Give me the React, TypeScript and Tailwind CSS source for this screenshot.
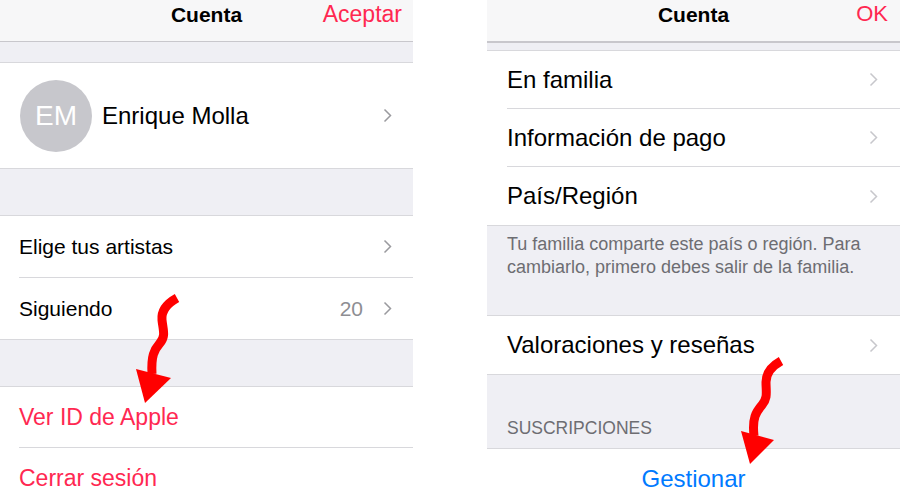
import React from 'react';

const font = { fontFamily: '"Liberation Sans", Arial, sans-serif' };

function Chevron({ light = false }: { light?: boolean }) {
  return (
    <svg width="9" height="15" viewBox="0 0 9 15" className={light ? 'text-[#c7c7cc]' : 'text-[#9a9a9f]'}>
      <polyline points="1.5,1.5 7.5,7.5 1.5,13.5" fill="none" stroke="currentColor" strokeWidth="1.5" />
    </svg>
  );
}

function LeftPanel() {
  return (
    <div className="w-[413px] h-[500px] overflow-hidden bg-[#efeff4] flex flex-col shrink-0">
      {/* nav */}
      <div className="h-[42px] shrink-0 bg-[#f7f7f8] border-b border-[#c8c7cc] relative flex items-center justify-center">
        <span className="text-[21px] font-bold text-black leading-none -mt-[12px]">Cuenta</span>
        <span className="absolute right-[11px] top-[3px] text-[23px] text-[#ff2851] leading-none">Aceptar</span>
      </div>
      <div className="h-[21px] shrink-0 border-b border-[#d8d8dc]" />

      {/* profile */}
      <div className="h-[106px] shrink-0 bg-white border-b border-[#d8d8dc] flex items-center pl-[20px] pr-[21px]">
        <div className="w-[72px] h-[72px] rounded-full bg-[#c7c7cc] flex items-center justify-center text-white text-[28px] leading-none">
          EM
        </div>
        <span className="ml-[10px] text-[24px] text-black flex-1">Enrique Molla</span>
        <Chevron />
      </div>

      <div className="h-[47px] shrink-0 border-b border-[#d8d8dc]" />

      <div className="bg-white shrink-0 border-b border-[#d8d8dc]">
        <div className="h-[62px] ml-[19px] pr-[21px] border-b border-[#d8d8dc] flex items-center">
          <span className="flex-1 text-[21px] text-black">Elige tus artistas</span>
          <Chevron />
        </div>
        <div className="h-[61px] ml-[19px] pr-[21px] flex items-center">
          <span className="flex-1 text-[21px] text-black">Siguiendo</span>
          <span className="text-[21px] text-[#8e8e93] mr-[20px]">20</span>
          <Chevron />
        </div>
      </div>

      <div className="h-[47px] shrink-0 border-b border-[#d8d8dc]" />

      <div className="bg-white flex-1">
        <div className="h-[61px] ml-[19px] border-b border-[#d8d8dc] flex items-center">
          <span className="text-[23px] text-[#ff2851]">Ver ID de Apple</span>
        </div>
        <div className="h-[61px] ml-[19px] flex items-center">
          <span className="text-[23px] text-[#ff2851]">Cerrar sesión</span>
        </div>
      </div>
    </div>
  );
}

function Row({ label, last = false }: { label: string; last?: boolean }) {
  return (
    <div className={`h-[58px] ml-[20px] pr-[22px] flex items-center ${last ? '' : 'border-b border-[#d8d8dc]'}`}>
      <span className="flex-1 text-[24px] text-black">{label}</span>
      <Chevron light />
    </div>
  );
}

function RightPanel() {
  return (
    <div className="flex-1 h-[500px] overflow-hidden bg-[#efeff4] flex flex-col">
      <div className="h-[43px] shrink-0 bg-[#f7f7f8] border-b-2 border-[#c8c7cc] relative flex items-center justify-center">
        <span className="text-[21px] font-bold text-black leading-none -mt-[12px]">Cuenta</span>
        <span className="absolute right-[12px] top-[3px] text-[22px] text-[#ff2851] leading-none">OK</span>
      </div>
      <div className="h-[8px] shrink-0 border-b border-[#d8d8dc]" />

      <div className="bg-white shrink-0 border-b border-[#d8d8dc]">
        <Row label="En familia" />
        <Row label="Información de pago" />
        <Row label="País/Región" last />
      </div>

      <div className="h-[90px] shrink-0 border-b border-[#d8d8dc] pl-[20px] pt-[7px] text-[18px] leading-[23px] text-[#6d6d72]">
        Tu familia comparte este país o región. Para
        <br />
        cambiarlo, primero debes salir de la familia.
      </div>

      <div className="bg-white shrink-0 border-b border-[#d8d8dc]">
        <Row label="Valoraciones y reseñas" last />
      </div>

      <div className="h-[74px] shrink-0 border-b border-[#d8d8dc] pl-[20px] flex items-end pb-[11px]">
        <span className="text-[17.5px] text-[#6d6d72] leading-none">SUSCRIPCIONES</span>
      </div>

      <div className="bg-white flex-1">
        <div className="h-[59px] flex items-center justify-center">
          <span className="text-[24px] text-[#007aff]">Gestionar</span>
        </div>
      </div>
    </div>
  );
}

export default function App() {
  return (
    <div className="relative w-[900px] h-[500px] overflow-hidden bg-white flex" style={font}>
      <LeftPanel />
      <div className="w-[74px] shrink-0 bg-white" />
      <RightPanel />

      {/* red hand-drawn arrows */}
      <svg className="absolute inset-0 pointer-events-none" width="900" height="500" viewBox="0 0 900 500">
        <path
          d="M177 298 C 168 303, 161 310, 162 320 C 163 330, 166 336, 160 343 C 154 350, 151 356, 152 374"
          fill="none"
          stroke="#ff0000"
          strokeWidth="9"
        />
        <polygon points="136,369 171,378 145,403" fill="#ff0000" />
        <path
          d="M781 361 C 772 366, 766 372, 766 382 C 766 392, 768 398, 762 405 C 756 412, 752 418, 754 436"
          fill="none"
          stroke="#ff0000"
          strokeWidth="9"
        />
        <polygon points="741,431 774,440 750,464" fill="#ff0000" />
      </svg>
    </div>
  );
}
